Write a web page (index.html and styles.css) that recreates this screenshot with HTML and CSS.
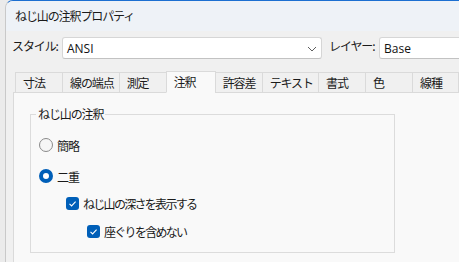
FILE: index.html
```html
<!DOCTYPE html>
<html lang="ja">
<head>
<meta charset="utf-8">
<link rel="stylesheet" href="styles.css">
</head>
<body>
<div class="window">
  <div class="titlebar">ねじ山の注釈プロパティ</div>
  <div class="content">
    <div class="fields">
      <span class="field-label">スタイル:</span>
      <div class="select">
        <span>ANSI</span>
        <svg class="chevron" width="10" height="6" viewBox="0 0 10 6"><path d="M1 1 L5 5 L9 1" fill="none" stroke="#5f5f5f" stroke-width="1"/></svg>
      </div>
      <span class="field-label layer">レイヤー:</span>
      <div class="textbox"><span>Base</span></div>
    </div>
    <div class="tabcontrol">
      <div class="tabs">
        <div class="tab">寸法</div>
        <div class="tab">線の端点</div>
        <div class="tab">測定</div>
        <div class="tab selected">注釈</div>
        <div class="tab">許容差</div>
        <div class="tab">テキスト</div>
        <div class="tab">書式</div>
        <div class="tab">色</div>
        <div class="tab">線種</div>
      </div>
      <div class="panel">
        <fieldset class="group">
          <legend>ねじ山の注釈</legend>
          <div class="option">
            <span class="radio"></span><span class="label">簡略</span>
          </div>
          <div class="option second">
            <span class="radio checked"></span><span class="label">二重</span>
          </div>
          <div class="option check1">
            <span class="checkbox"><svg width="13" height="13" viewBox="0 0 13 13"><path d="M3.5 6.8 L5.6 8.9 L9.6 4.6" fill="none" stroke="#fff" stroke-width="1.1"/></svg></span><span class="label kana">ねじ山の深さを表示する</span>
          </div>
          <div class="option check2">
            <span class="checkbox"><svg width="13" height="13" viewBox="0 0 13 13"><path d="M3.5 6.8 L5.6 8.9 L9.6 4.6" fill="none" stroke="#fff" stroke-width="1.1"/></svg></span><span class="label kana">座ぐりを含めない</span>
          </div>
        </fieldset>
      </div>
    </div>
  </div>
</div>
</body>
</html>
```

FILE: styles.css
```css
html, body {
  margin: 0;
  padding: 0;
}
body {
  width: 459px;
  height: 262px;
  overflow: hidden;
  background: #ebebeb;
  font-family: "Noto Sans CJK JP", "Noto Sans", sans-serif;
  font-size: 12px;
  letter-spacing: -1.1px;
  color: #1a1a1a;
}
.window {
  margin-left: 5px;
  height: 262px;
  border-left: 1px solid #c9c9c9;
  border-top: 1px solid #1c6fd1;
  border-top-left-radius: 8px;
  background: #f0f0f0;
  overflow: hidden;
}
.titlebar {
  height: 30px;
  line-height: 30px;
  padding-left: 9px;
  background: #eef2f7;
  font-size: 12px;
}
.content {
  padding-left: 6px;
}
.fields {
  display: flex;
  align-items: center;
  margin-top: 6px;
  height: 22px;
}
.field-label {
  width: 50px;
  flex: none;
  line-height: 22px;
  margin-top: -4px;
}
.field-label.layer {
  margin-left: 7px;
}
.select, .textbox {
  box-sizing: border-box;
  height: 22px;
  background: #ffffff;
  border: 1px solid #d6d6d6;
  border-bottom-color: #c2c2c2;
  border-radius: 3px;
  display: flex;
  align-items: center;
  padding-left: 4px;
  font-family: "Open Sans", "Noto Sans", sans-serif;
  font-size: 12px;
  letter-spacing: normal;
  color: #111;
  flex: none;
}
.select {
  width: 260px;
  justify-content: space-between;
  padding-right: 4px;
}
.textbox {
  width: 120px;
}
.chevron {
  display: block;
  margin-top: 1px;
}
.tabcontrol {
  margin-left: 1px;
  margin-top: 13px;
}
.tabs {
  display: flex;
  align-items: flex-end;
  padding-left: 2px;
  height: 21px;
  position: relative;
  z-index: 1;
  margin-bottom: -1px;
}
.tab {
  box-sizing: border-box;
  height: 21px;
  min-width: 47px;
  padding: 0 7px;
  border: 1px solid #dadada;
  border-right: none;
  background: #f0f0f0;
  line-height: 19px;
  white-space: nowrap;
}
.tab:last-child {
  border-right: 1px solid #dadada;
}
.tab.selected {
  height: 22px;
  min-width: 50px;
  background: #f9f9f9;
  border-bottom-color: #f9f9f9;
  border-right: 1px solid #dadada;
  margin-right: -1px;
  line-height: 20px;
  padding-bottom: 2px;
}
.panel {
  background: #f9f9f9;
  border-top: 1px solid #dadada;
  border-left: 1px solid #dadada;
  height: 200px;
  padding-left: 16px;
  padding-top: 13px;
}
.group {
  box-sizing: border-box;
  margin: 0;
  width: 365px;
  height: 147px;
  border: 1px solid #dcdcdc;
  padding: 0 0 0 8px;
}
.group legend {
  padding: 0 2px;
  margin-left: -3px;
  line-height: 16px;
}
.option {
  display: flex;
  align-items: center;
  gap: 4px;
  height: 20px;
  margin-top: 13px;
}
.label.kana {
  letter-spacing: -1.7px;
}
.option.second {
  margin-top: 11px;
}
.option.check1 {
  margin-top: 7px;
  margin-left: 27px;
}
.option.check2 {
  margin-top: 8px;
  margin-left: 48px;
}
.radio {
  box-sizing: border-box;
  width: 14px;
  height: 14px;
  border-radius: 50%;
  border: 1px solid #8a8a8a;
  background: #f6f6f6;
  flex: none;
}
.radio.checked {
  border: 4.5px solid #005fb8;
  background: #ffffff;
}
.checkbox {
  width: 13px;
  height: 13px;
  border-radius: 3px;
  background: #005fb8;
  flex: none;
  display: flex;
}
.checkbox svg {
  display: block;
}
```
